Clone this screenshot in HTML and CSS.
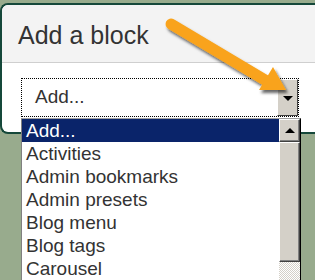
FILE: index.html
```html
<!DOCTYPE html>
<html>
<head>
    <title>Add a block</title>
    <link rel="stylesheet" href="styles.css">
</head>
<body>
    <div class="modal">
        <div class="modal-header">
            <h3>Add a block</h3>
        </div>
        <div class="modal-body">
            <div class="select-box">
                <span class="select-value">Add...</span>
                <span class="select-button"><span class="down-arrow"></span></span>
            </div>
        </div>
    </div>

    <div class="listbox">
        <ul class="options">
            <li class="selected">Add...</li>
            <li>Activities</li>
            <li>Admin bookmarks</li>
            <li>Admin presets</li>
            <li>Blog menu</li>
            <li>Blog tags</li>
            <li>Carousel</li>
        </ul>
        <div class="scrollbar">
            <div class="scroll-btn"><span class="up-arrow"></span></div>
            <div class="scroll-thumb"></div>
            <div class="scroll-track"></div>
        </div>
    </div>

    <svg class="pointer" width="315" height="280" viewBox="0 0 315 280">
        <defs>
            <filter id="shade" x="-20%" y="-20%" width="140%" height="140%">
                <feDropShadow dx="2" dy="3" stdDeviation="1.8" flood-color="#000" flood-opacity="0.6"/>
            </filter>
        </defs>
        <g filter="url(#shade)">
            <line x1="171" y1="24" x2="265" y2="80" stroke="#f9a31b" stroke-width="11" stroke-linecap="round"/>
            <polygon points="273,67 286,90 259,90" fill="#f9a31b"/>
        </g>
    </svg>
</body>
</html>
```

FILE: styles.css
```css
html {
    overflow: hidden;
}

body {
    margin: 0;
    padding-top: 3px;
    background-color: #98ab8d;
    font-family: "Liberation Sans", Arial, sans-serif;
}

.modal {
    box-sizing: border-box;
    width: 315px;
    height: 131px;
    background-color: #fff;
    border: 2px solid #15483a;
    border-right: none;
    border-radius: 8px 0 0 8px;
    overflow: hidden;
}

.modal-header {
    box-sizing: border-box;
    height: 58px;
    padding: 15px 0 0 16px;
    background-color: #f3f3f3;
    border-bottom: 1px solid #cfcfcf;
}

.modal-header h3 {
    margin: 0;
    font-size: 25px;
    font-weight: normal;
    line-height: 30px;
    color: #333;
}

.modal-body {
    padding: 15px 0 0 19px;
}

.select-box {
    box-sizing: border-box;
    display: flex;
    width: 278px;
    height: 39px;
    border: 1px dotted #000;
    background-color: #fff;
}

.select-value {
    flex: 1;
    padding-left: 13px;
    font-size: 19px;
    line-height: 35px;
    color: #333;
}

.select-button {
    box-sizing: border-box;
    display: flex;
    align-items: center;
    justify-content: center;
    width: 21px;
    background-color: #d4d0c8;
    border: 1px solid;
    border-color: #fff #404040 #404040 #fff;
}

.down-arrow {
    width: 0;
    height: 0;
    border-left: 5px solid transparent;
    border-right: 5px solid transparent;
    border-top: 5px solid #000;
    margin-top: 2px;
}

.listbox {
    position: absolute;
    top: 118px;
    left: 21px;
    display: flex;
    width: 280px;
    height: 162px;
    box-sizing: border-box;
    background-color: #fff;
    border-top: 1px solid #a0a0a0;
    border-left: 1px solid #808080;
    border-right: 1px solid #000;
}

.options {
    flex: 1;
    margin: 0;
    padding: 0;
    list-style: none;
    overflow: hidden;
}

.options li {
    height: 23px;
    padding-left: 4px;
    font-size: 19px;
    line-height: 23px;
    color: #333;
    white-space: nowrap;
}

.options li.selected {
    background-color: #0a246a;
    color: #fff;
}

.scrollbar {
    width: 21px;
    display: flex;
    flex-direction: column;
}

.scroll-btn,
.scroll-thumb {
    box-sizing: border-box;
    background-color: #d4d0c8;
    border: 1px solid;
    border-color: #fff #404040 #404040 #fff;
    box-shadow: inset -1px -1px #808080;
}

.scroll-btn {
    height: 23px;
    display: flex;
    align-items: center;
    justify-content: center;
}

.up-arrow {
    width: 0;
    height: 0;
    border-left: 5px solid transparent;
    border-right: 5px solid transparent;
    border-bottom: 5px solid #000;
}

.scroll-thumb {
    height: 120px;
}

.scroll-track {
    flex: 1;
    background-color: #fff;
    background-image: repeating-conic-gradient(#d4d0c8 0 25%, #fff 0 50%);
    background-size: 2px 2px;
}

.pointer {
    position: absolute;
    top: 0;
    left: 0;
}
```
